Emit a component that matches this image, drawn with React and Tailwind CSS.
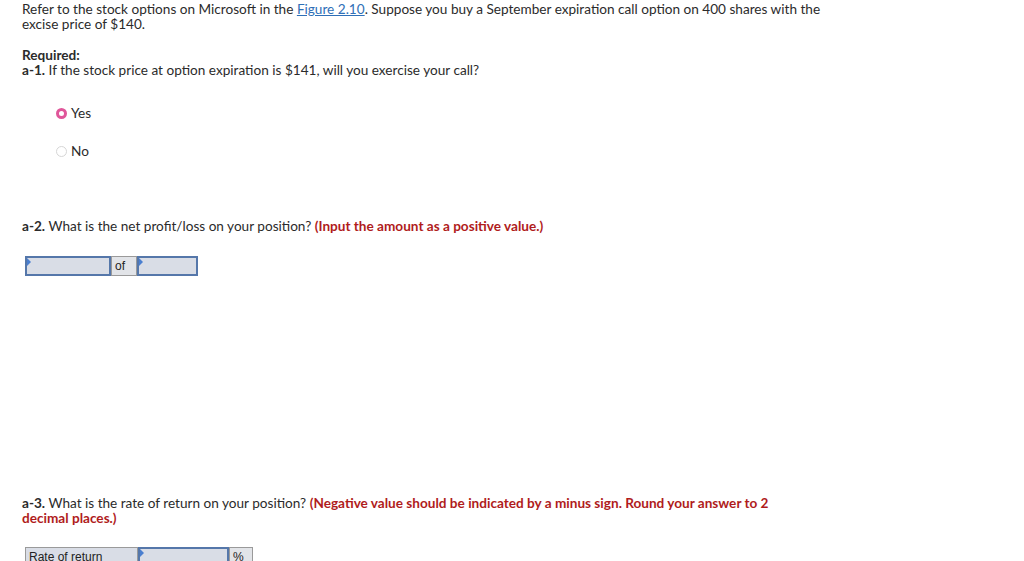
const Corner = () => (
  <span className="absolute left-0 top-0 h-0 w-0 border-l-[4px] border-t-[4px] border-b-[4px] border-l-[#4a7fd0] border-t-transparent border-b-transparent" />
)

const Radio = ({ checked, label }) => (
  <label className="flex items-center gap-[4px]">
    {checked ? (
      <span className="inline-block h-[11px] w-[11px] rounded-full border-[3px] border-[#e0569a] bg-white" />
    ) : (
      <span className="inline-block h-[11px] w-[11px] rounded-full border border-[#d6d6d6] bg-white" />
    )}
    <span>{label}</span>
  </label>
)

export default function App() {
  return (
    <div className="min-h-[561px] bg-white px-[22px] text-[13.6px] leading-[15px] text-[#2b2b2b] [font-family:Lato,'Liberation_Sans',sans-serif]">
      <p className="pt-[2px]">
        Refer to the stock options on Microsoft in the{' '}
        <a href="#" className="text-[#2f6fb7] underline">Figure 2.10</a>. Suppose you buy a September expiration call option on 400 shares with the
        <br />
        excise price of $140.
      </p>

      <p className="mt-[16px] font-bold">Required:</p>
      <p>
        <span className="font-bold">a-1.</span> If the stock price at option expiration is $141, will you exercise your call?
      </p>

      <div className="ml-[34px] mt-[28px] flex flex-col gap-[23px]">
        <Radio checked label="Yes" />
        <Radio label="No" />
      </div>

      <p className="mt-[60px]">
        <span className="font-bold">a-2.</span> What is the net profit/loss on your position?{' '}
        <span className="font-bold text-[#b01c1c]">(Input the amount as a positive value.)</span>
      </p>

      <div className="ml-[3px] mt-[22px] flex h-[20px] w-[173px] text-[12px] [font-family:Arial,'Liberation_Sans',sans-serif]">
        <div className="relative w-[86px] border-2 border-[#5577aa] bg-[#d9dde6]">
          <Corner />
        </div>
        <div className="flex w-[26px] items-center border border-[#9a9a9a] bg-[#e2e4e8] pl-[3px] text-[#222]">of</div>
        <div className="relative flex-1 border-2 border-[#5577aa] bg-[#d9dde6]">
          <Corner />
        </div>
      </div>

      <p className="mt-[220px]">
        <span className="font-bold">a-3.</span> What is the rate of return on your position?{' '}
        <span className="font-bold text-[#b01c1c]">(Negative value should be indicated by a minus sign. Round your answer to 2</span>
        <br />
        <span className="font-bold text-[#b01c1c]">decimal places.)</span>
      </p>

      <div className="ml-[3px] mt-[21px] flex h-[20px] w-[228px] text-[12px] [font-family:Arial,'Liberation_Sans',sans-serif]">
        <div className="flex w-[113px] items-start border border-[#9a9a9a] bg-[#d9dde6] pl-[3px] pt-[2px] text-[#222]">Rate of return</div>
        <div className="relative w-[91px] border-2 border-[#5577aa] bg-[#d9dde6]">
          <Corner />
        </div>
        <div className="flex flex-1 items-start border border-[#9a9a9a] bg-[#e2e4e8] pl-[3px] pt-[2px] text-[#222]">%</div>
      </div>
    </div>
  )
}
